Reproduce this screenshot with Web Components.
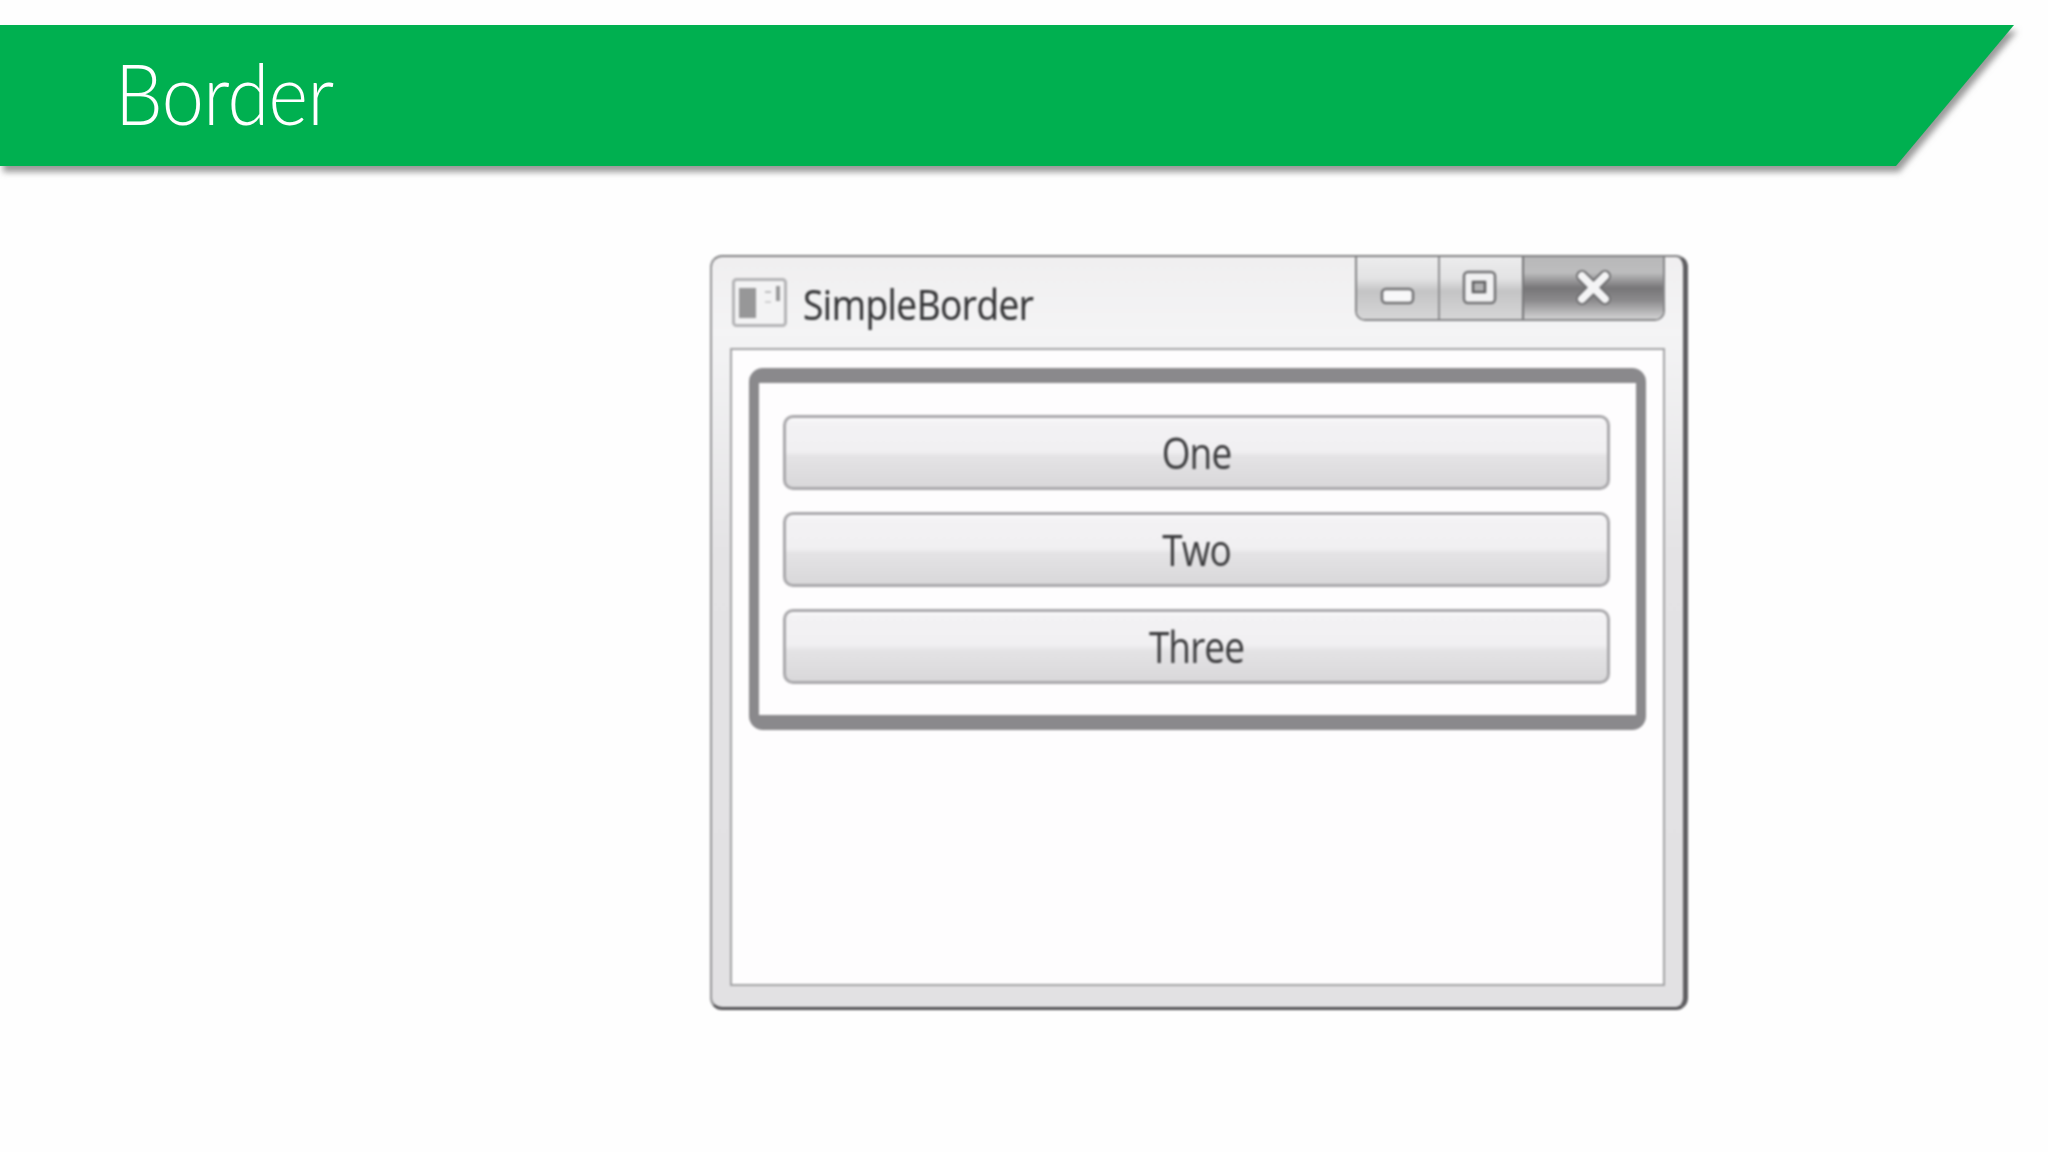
<!doctype html>
<html>
<head>
<meta charset="utf-8">
<title>Border</title>
<style>
   html, body { margin: 0; height: 100%; background: #fefefe; }
   body { display: flex; flex-direction: column; padding-top: 25px; box-sizing: border-box; }
</style>
</head>
<body>
<slide-banner>Border</slide-banner>
<slide-stage>
   <app-window caption="SimpleBorder">
      <border-box>
         <win-button>One</win-button>
         <win-button>Two</win-button>
         <win-button>Three</win-button>
      </border-box>
   </app-window>
</slide-stage>

<script>
const define = ( selector, html ) => {
   customElements.define( selector, class extends HTMLElement {
      constructor() { super();
         this.attachShadow( {mode: 'open'} ).innerHTML = typeof html === 'function' ? html( this ) : html;
      }
   });
};

define( 'slide-banner', `
   <style>
      :host { display: block; height: 141px; filter: drop-shadow( 3px 6px 3px rgba( 70,70,70,.55 )); }
      .shape { height: 100%; width: 2014px; background: #00b050; color: #fff;
         clip-path: polygon( 0 0, 100% 0, 1896px 100%, 0 100% );
         display: flex; align-items: center; padding-left: 115px; box-sizing: border-box; }
      .text { font: 300 84px/1 Lato, sans-serif; letter-spacing: -.6px; margin-top: -6px;
         transform: scaleX( .9 ); transform-origin: left center; }
   </style>
   <div class="shape"><span class="text"><slot></slot></span></div>` );

define( 'slide-stage', `
   <style>
      :host { display: flex; justify-content: flex-start; padding: 89px 0 0 710px; }
   </style>
   <slot></slot>` );

define( 'app-window', el => `
   <style>
      :host { display: flex; flex-direction: column; width: 978px; height: 755px; box-sizing: border-box;
         border-style: solid; border-color: #808082 #5f5e61 #525154 #939395; border-width: 2px 5px 3px 2px;
         border-radius: 12px;
         background: linear-gradient( 180deg, #f0eff0 0, #f4f4f5 10%, #e4e3e5 40%, #e2e1e3 100% );
         padding: 0 18px 21px 18px; filter: blur( .8px ); }
      .bar { height: 91px; display: flex; align-items: flex-start; flex: none; }
      .icon { width: 55px; height: 49px; margin: 21px 16px 0 2px; flex: none; }
      .title { font: 400 37px/1 "Open Sans", sans-serif; color: #343436; letter-spacing: -.5px;
         margin-top: 28px; transform: scaleY( 1.12 ); -webkit-text-stroke: .2px #343436; }
      .caption { margin-left: auto; display: flex; height: 62px; border: solid #858587; border-width: 0 2px 2px 2px;
         border-radius: 0 0 10px 10px; overflow: hidden; box-sizing: content-box; }
      .caption div { display: flex; align-items: flex-start; justify-content: center; box-sizing: border-box; }
      .min { width: 83px; border-right: 2px solid #8f8f91;
         background: linear-gradient( 180deg, #ececed 0, #e3e3e4 35%, #c4c4c5 55%, #d6d6d7 100% ); }
      .max { width: 84px; border-right: 2px solid #757577;
         background: linear-gradient( 180deg, #ececed 0, #e3e3e4 35%, #c4c4c5 55%, #d6d6d7 100% ); }
      .close { width: 139px;
         background: linear-gradient( 180deg, #b8b8b9 0, #bdbdbe 25%, #777678 50%, #8b8a8c 70%, #d2d2d3 100% ); }
      .min svg { margin-top: 30px; } .max svg, .close svg { margin-top: 13px; }
      .max svg { margin-right: 4px; }
      .client { flex: 1; background: #fefdfe; border: 2px solid #a2a2a4; box-sizing: border-box; padding: 18px 17px 0 17px; }
   </style>
   <div class="bar">
      <svg class="icon" viewBox="0 0 55 49">
         <rect x="1.5" y="1.5" width="52" height="46" rx="3" fill="#f3f3f4" stroke="#b4b4b6" stroke-width="3"/>
         <rect x="7" y="10" width="17" height="30" fill="#979798"/>
         <rect x="33" y="13" width="6" height="2" fill="#bcbcbd"/>
         <rect x="33" y="23" width="6" height="2" fill="#cfcfd0"/>
         <rect x="44" y="8" width="4" height="15" fill="#99999a"/>
      </svg>
      <span class="title">${ el.getAttribute( 'caption' ) }</span>
      <div class="caption">
         <div class="min"><svg width="35" height="18" viewBox="0 0 35 18">
            <rect x="2" y="2" width="31" height="14" rx="4" fill="#f8f8f9" stroke="#727274" stroke-width="2.5"/>
         </svg></div>
         <div class="max"><svg width="35" height="35" viewBox="0 0 35 35">
            <rect x="2" y="2" width="31" height="31" rx="4" fill="#f1f1f2" stroke="#727274" stroke-width="2.5"/>
            <rect x="11" y="12" width="12" height="10" fill="#b3b3b4" stroke="#5f5f61" stroke-width="2.5"/>
         </svg></div>
         <div class="close"><svg width="37" height="35" viewBox="0 0 37 35">
            <path d="M7 6 L30 29 M30 6 L7 29" fill="none" stroke="#6d6d6f" stroke-width="12" stroke-linecap="round"/>
            <path d="M7 6 L30 29 M30 6 L7 29" fill="none" stroke="#f4f4f5" stroke-width="8" stroke-linecap="round"/>
         </svg></div>
      </div>
   </div>
   <div class="client"><slot></slot></div>` );

define( 'border-box', `
   <style>
      :host { display: flex; flex-direction: column; gap: 22px; box-sizing: border-box;
         border-style: solid; border-color: #8a898c; border-width: 15px 10px 15px 10px; border-radius: 14px;
         padding: 32px 26px 31px 24px; }
   </style>
   <slot></slot>` );

define( 'win-button', `
   <style>
      :host { display: flex; align-items: center; justify-content: center; height: 75px; box-sizing: border-box;
         border: 3px solid #a9a8ab; border-radius: 10px;
         background: linear-gradient( 180deg, #fcfcfd 0, #f3f2f4 6%, #f1f0f2 48%, #e4e3e5 56%, #d9d8da 100% );
         font: 400 37px/1 "Open Sans", sans-serif; color: #3a3a3c; }
      span { transform: scaleY( 1.18 ); letter-spacing: -.9px; margin-top: -2px; }
   </style>
   <span><slot></slot></span>` );
</script>
</body>
</html>
